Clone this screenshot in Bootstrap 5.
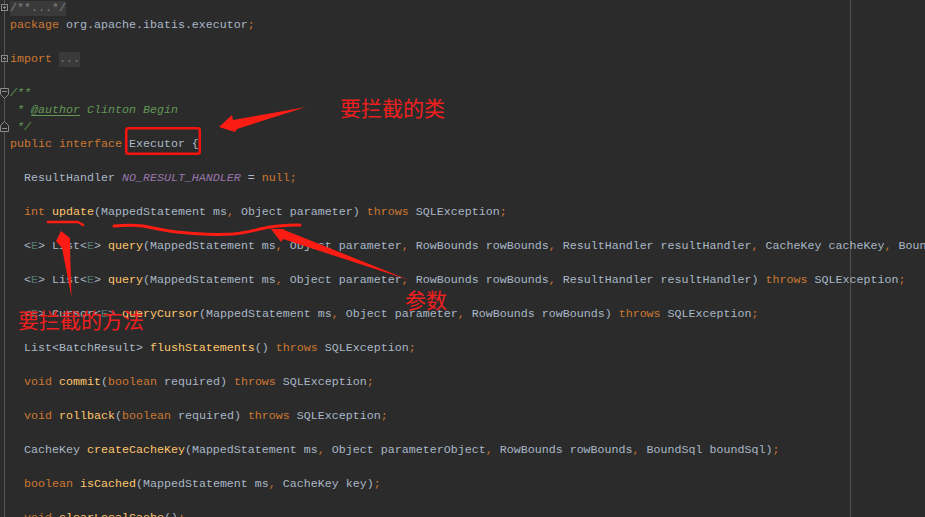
<!DOCTYPE html>
<html lang="en"><head><meta charset="utf-8">
<link href="https://cdn.jsdelivr.net/npm/bootstrap@5.3.0/dist/css/bootstrap.min.css" rel="stylesheet">
<style>
html,body{margin:0;height:517px;overflow:hidden;background:#2b2b2b}
.editor-shell{width:925px;height:517px;overflow:hidden;position:relative;background-color:#2b2b2b;background-image:linear-gradient(#515151,#515151),linear-gradient(#555,#555);background-size:1px 100%,1px 100%;background-position:850px 0,4px 0;background-repeat:no-repeat}
.code-pane{margin:0 0 0 10px;font:11.67px/17px "Liberation Mono",monospace;color:#a9b7c6}
.code-line{height:17px;white-space:pre}
.kw{color:#cc7832}.fn{color:#ffc66d}.cst{color:#9876aa;font-style:italic}.doc{color:#629755;font-style:italic}.tag{color:#629755;font-style:italic;text-decoration:underline;text-underline-offset:2px}
.gen{color:#507874}.fold{color:#808080;background:#3a3a3a;display:inline-block;height:15px;line-height:15px}
.overlay-art{position:absolute;left:0;top:0}
.note{position:absolute;color:#f01f1f;font-family:"Noto Sans CJK SC",sans-serif;font-size:21px;line-height:1;white-space:nowrap}
.note-cls{left:340px;top:97px}.note-arg{left:405px;top:289px}.note-mth{left:18px;top:309px}
</style></head><body>
<div class="editor-shell d-flex">
<div class="code-pane">
<div class="code-line"><span class="fold">/**...*/</span></div>
<div class="code-line"><span class="kw">package</span> org.apache.ibatis.executor<span class="kw">;</span></div>
<div class="code-line"></div>
<div class="code-line"><span class="kw">import</span> <span class="fold">...</span></div>
<div class="code-line"></div>
<div class="code-line"><span class="doc">/**</span></div>
<div class="code-line"><span class="doc"> * </span><span class="tag">@author</span><span class="doc"> Clinton Begin</span></div>
<div class="code-line"><span class="doc"> */</span></div>
<div class="code-line"><span class="kw">public interface</span> Executor {</div>
<div class="code-line"></div>
<div class="code-line">  ResultHandler <span class="cst">NO_RESULT_HANDLER</span> = <span class="kw">null;</span></div>
<div class="code-line"></div>
<div class="code-line">  <span class="kw">int</span> <span class="fn">update</span>(MappedStatement ms<span class="kw">,</span> Object parameter) <span class="kw">throws</span> SQLException<span class="kw">;</span></div>
<div class="code-line"></div>
<div class="code-line">  &lt;<span class="gen">E</span>&gt; List&lt;<span class="gen">E</span>&gt; <span class="fn">query</span>(MappedStatement ms<span class="kw">,</span> Object parameter<span class="kw">,</span> RowBounds rowBounds<span class="kw">,</span> ResultHandler resultHandler<span class="kw">,</span> CacheKey cacheKey<span class="kw">,</span> BoundSql boundSql) <span class="kw">throws</span> SQLException<span class="kw">;</span></div>
<div class="code-line"></div>
<div class="code-line">  &lt;<span class="gen">E</span>&gt; List&lt;<span class="gen">E</span>&gt; <span class="fn">query</span>(MappedStatement ms<span class="kw">,</span> Object parameter<span class="kw">,</span> RowBounds rowBounds<span class="kw">,</span> ResultHandler resultHandler) <span class="kw">throws</span> SQLException<span class="kw">;</span></div>
<div class="code-line"></div>
<div class="code-line">  &lt;<span class="gen">E</span>&gt; Cursor&lt;<span class="gen">E</span>&gt; <span class="fn">queryCursor</span>(MappedStatement ms<span class="kw">,</span> Object parameter<span class="kw">,</span> RowBounds rowBounds) <span class="kw">throws</span> SQLException<span class="kw">;</span></div>
<div class="code-line"></div>
<div class="code-line">  List&lt;BatchResult&gt; <span class="fn">flushStatements</span>() <span class="kw">throws</span> SQLException<span class="kw">;</span></div>
<div class="code-line"></div>
<div class="code-line">  <span class="kw">void</span> <span class="fn">commit</span>(<span class="kw">boolean</span> required) <span class="kw">throws</span> SQLException<span class="kw">;</span></div>
<div class="code-line"></div>
<div class="code-line">  <span class="kw">void</span> <span class="fn">rollback</span>(<span class="kw">boolean</span> required) <span class="kw">throws</span> SQLException<span class="kw">;</span></div>
<div class="code-line"></div>
<div class="code-line">  CacheKey <span class="fn">createCacheKey</span>(MappedStatement ms<span class="kw">,</span> Object parameterObject<span class="kw">,</span> RowBounds rowBounds<span class="kw">,</span> BoundSql boundSql)<span class="kw">;</span></div>
<div class="code-line"></div>
<div class="code-line">  <span class="kw">boolean</span> <span class="fn">isCached</span>(MappedStatement ms<span class="kw">,</span> CacheKey key)<span class="kw">;</span></div>
<div class="code-line"></div>
<div class="code-line">  <span class="kw">void</span> <span class="fn">clearLocalCache</span>()<span class="kw">;</span></div>
</div>
<svg class="overlay-art" width="925" height="517" viewBox="0 0 925 517" fill="none">
<g stroke="#8a8a8a" fill="#2b2b2b"><rect x="1.500" y="4.500" width="6" height="6"/><rect x="1.500" y="55.500" width="6" height="6"/><path d="M0.500 88.500h8v6l-4 4l-4-4z"/><path d="M0.500 125.500l4-4l4 4v6h-8z"/></g>
<g stroke="#8a8a8a"><path d="M3 7.500h3M4.500 6v3M3 58.500h3M4.500 57v3M2 91.500h5M2 128.500h5"/></g>
<rect x="126.250" y="128.250" width="73.500" height="25.500" rx="2" stroke="#f5120f" stroke-width="2.500"/>
<g fill="#fb1d14">
<path d="M219 127L232 115L233 120L306 107L237 129L235 132z"/>
<path d="M271 229L285 229L283 229.500L409 280L283 239L281 242z"/>
<path d="M61 231L70 238L70 247L71.500 297L62 248L56 241z"/>
</g>
<g stroke="#fb1d14" stroke-linecap="round" stroke-linejoin="round">
<path stroke-width="2.500" d="M48 222H78L83 225"/>
<path stroke-width="3" d="M114 226C125 225 135 225 143 226C155 228 165 231 177 232C195 234 215 235 233 234C245 233 252 231 260 229C268 227 280 225 300 225"/>
</g>
</svg>
<span class="note note-cls">要拦截的类</span>
<span class="note note-arg">参数</span>
<span class="note note-mth">要拦截的方法</span>
</div>
<script src="https://cdn.jsdelivr.net/npm/bootstrap@5.3.0/dist/js/bootstrap.bundle.min.js"></script>
</body></html>
